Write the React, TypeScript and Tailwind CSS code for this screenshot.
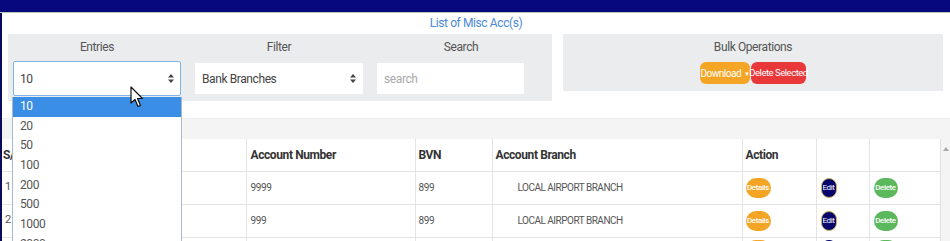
import React from "react";

const entries = ["10", "20", "50", "100", "200", "500", "1000", "2000"];

const rows = [
  { sn: "1", acc: "9999", bvn: "899", branch: "LOCAL AIRPORT BRANCH" },
  { sn: "2", acc: "999", bvn: "899", branch: "LOCAL AIRPORT BRANCH" },
];

function Spinner() {
  return (
    <svg width="6" height="9" viewBox="0 0 6 9" className="shrink-0">
      <path d="M3 0 L6 3.5 H0 Z" fill="#444" />
      <path d="M3 9 L6 5.5 H0 Z" fill="#444" />
    </svg>
  );
}

function Cursor() {
  return (
    <svg width="14" height="22" viewBox="0 0 14 22" className="absolute left-[130px] top-[86px]">
      <path
        d="M1 1 L1 17 L5 13.5 L8 20.5 L10.5 19.5 L7.5 12.5 L12.5 12.5 Z"
        fill="#fff"
        stroke="#111"
        strokeWidth="1.2"
        strokeLinejoin="round"
      />
    </svg>
  );
}

function Pill({ label, color, w }: { label: string; color: string; w: string }) {
  return (
    <span
      className={`inline-flex h-[20px] ${w} items-center justify-center rounded-full text-[8px] font-medium tracking-tighter text-white ${color}`}
    >
      {label}
    </span>
  );
}

export default function App() {
  return (
    <div className="relative h-[241px] w-[950px] overflow-hidden bg-white font-['Roboto',sans-serif] tracking-tight text-[#444]">
      <div className="h-[13px] border-b border-[#b9c6b0] bg-[#07077e]" />
      <div className="flex">
        <div className="w-[2px] shrink-0 bg-[#0a0a5e]" />
        <div className="flex-1">
          <div className="h-[21px] text-center text-[12px] leading-[20px] text-[#4a8ad6]">
            List of Misc Acc(s)
          </div>

          <div className="flex items-start pl-[6px]">
            <div className="flex h-[67px] w-[544px] gap-[14px] bg-[#ebecee] px-[5px] pt-[6px]">
              <div className="flex w-[168px] flex-col items-center">
                <div className="h-[17px] text-[12px] leading-[14px] text-[#555]">Entries</div>
                <div className="mt-[4px] flex h-[35px] w-full items-center justify-between rounded-[2px] border border-[#7fb4e6] bg-white px-[6px] text-[12px]">
                  <span>10</span>
                  <Spinner />
                </div>
              </div>
              <div className="flex w-[168px] flex-col items-center">
                <div className="h-[17px] text-[12px] leading-[14px] text-[#555]">Filter</div>
                <div className="mt-[6px] flex h-[31px] w-full items-center justify-between bg-white px-[7px] text-[12px]">
                  <span>Bank Branches</span>
                  <Spinner />
                </div>
              </div>
              <div className="flex w-[168px] flex-col items-center">
                <div className="h-[17px] text-[12px] leading-[14px] text-[#555]">Search</div>
                <div className="mt-[6px] flex h-[31px] w-[147px] items-center self-start bg-white px-[7px] text-[12px] text-[#aaa]">
                  search
                </div>
              </div>
            </div>

            <div className="ml-[11px] flex h-[57px] w-[380px] flex-col items-center bg-[#ebecee] pt-[6px]">
              <div className="h-[17px] text-[12px] leading-[14px] text-[#555]">Bulk Operations</div>
              <div className="mt-[5px] flex whitespace-nowrap">
                <span className="inline-flex h-[22px] w-[50px] items-center justify-center gap-[3px] rounded-[6px] bg-[#f5a525] text-[10px] tracking-tighter text-white">
                  Download <span className="text-[6px]">▼</span>
                </span>
                <span className="ml-[1px] inline-flex h-[22px] w-[55px] items-center justify-center rounded-[6px] bg-[#e8383a] text-[9.5px] tracking-tighter text-white">
                  Delete Selected
                </span>
              </div>
            </div>
          </div>

          <div className="h-[17px]" />
          <div className="h-[21px] border-t border-[#efefef] bg-[#f4f4f4]" />

          <div className="flex">
            <table className="w-[938px] table-fixed border-collapse text-left">
              <colgroup>
                <col className="w-[244px]" />
                <col className="w-[169px]" />
                <col className="w-[77px]" />
                <col className="w-[250px]" />
                <col className="w-[74px]" />
                <col className="w-[53px]" />
                <col className="w-[71px]" />
              </colgroup>
              <thead>
                <tr className="h-[32px] text-[12px] font-bold text-[#333]">
                  <th className="border-b border-[#e4e4e4] pl-[1px]">S/N</th>
                  <th className="border-b border-l border-[#e4e4e4] pl-[4px]">Account Number</th>
                  <th className="border-b border-l border-[#e4e4e4] pl-[3px]">BVN</th>
                  <th className="border-b border-l border-[#e4e4e4] pl-[3px]">Account Branch</th>
                  <th className="border-b border-l border-[#e4e4e4] pl-[3px]">Action</th>
                  <th className="border-b border-l border-[#e4e4e4]" />
                  <th className="border-b border-l border-[#e4e4e4]" />
                </tr>
              </thead>
              <tbody>
                {rows.map((r) => (
                  <tr key={r.sn} className="h-[33px] text-[10px] text-[#555]">
                    <td className="border-b border-[#e4e4e4] pl-[3px] text-[11px]">{r.sn}</td>
                    <td className="border-b border-l border-[#e4e4e4] pl-[4px]">{r.acc}</td>
                    <td className="border-b border-l border-[#e4e4e4] pl-[3px]">{r.bvn}</td>
                    <td className="border-b border-l border-[#e4e4e4] pl-[25px] tracking-tighter">{r.branch}</td>
                    <td className="border-b border-l border-[#e4e4e4] pl-[3px]">
                      <Pill label="Details" color="bg-[#f5a525]" w="w-[25px]" />
                    </td>
                    <td className="border-b border-l border-[#e4e4e4] pl-[4px]">
                      <span className="inline-flex h-[20px] w-[16px] items-center justify-center rounded-full border border-[#c9b35a] bg-[#06066e] text-[8px] text-white">
                        Edit
                      </span>
                    </td>
                    <td className="border-b border-l border-[#e4e4e4] pl-[4px]">
                      <Pill label="Delete" color="bg-[#5cb85c]" w="w-[24px]" />
                    </td>
                  </tr>
                ))}
                <tr className="h-[33px] align-top">
                  <td />
                  <td className="border-l border-[#e4e4e4]" />
                  <td className="border-l border-[#e4e4e4]" />
                  <td className="border-l border-[#e4e4e4]" />
                  <td className="border-l border-[#e4e4e4] pl-[3px] pt-[2px]">
                    <span className="block h-[20px] w-[25px] rounded-full bg-[#f5a525]" />
                  </td>
                  <td className="border-l border-[#e4e4e4] pl-[4px] pt-[2px]">
                    <span className="block h-[20px] w-[16px] rounded-full bg-[#06066e]" />
                  </td>
                  <td className="border-l border-[#e4e4e4] pl-[4px] pt-[2px]">
                    <span className="block h-[20px] w-[24px] rounded-full bg-[#5cb85c]" />
                  </td>
                </tr>
              </tbody>
            </table>
            <div className="flex w-[10px] shrink-0 justify-center border-l border-[#e0e0e0] bg-[#f4f4f4] pt-[8px]">
              <svg width="6" height="4" viewBox="0 0 6 4">
                <path d="M3 0 L6 4 H0 Z" fill="#a8a8a8" />
              </svg>
            </div>
          </div>
        </div>
      </div>

      <div className="absolute left-[12px] top-[97px] w-[170px] border border-t-0 border-[#a7b9d1] bg-white text-[12px] text-[#555]">
        {entries.map((e, i) => (
          <div
            key={e}
            className={`h-[19.7px] pl-[7px] leading-[19.7px] ${i === 0 ? "bg-[#3a8ee6] text-white" : ""}`}
          >
            {e}
          </div>
        ))}
      </div>
      <Cursor />
    </div>
  );
}
